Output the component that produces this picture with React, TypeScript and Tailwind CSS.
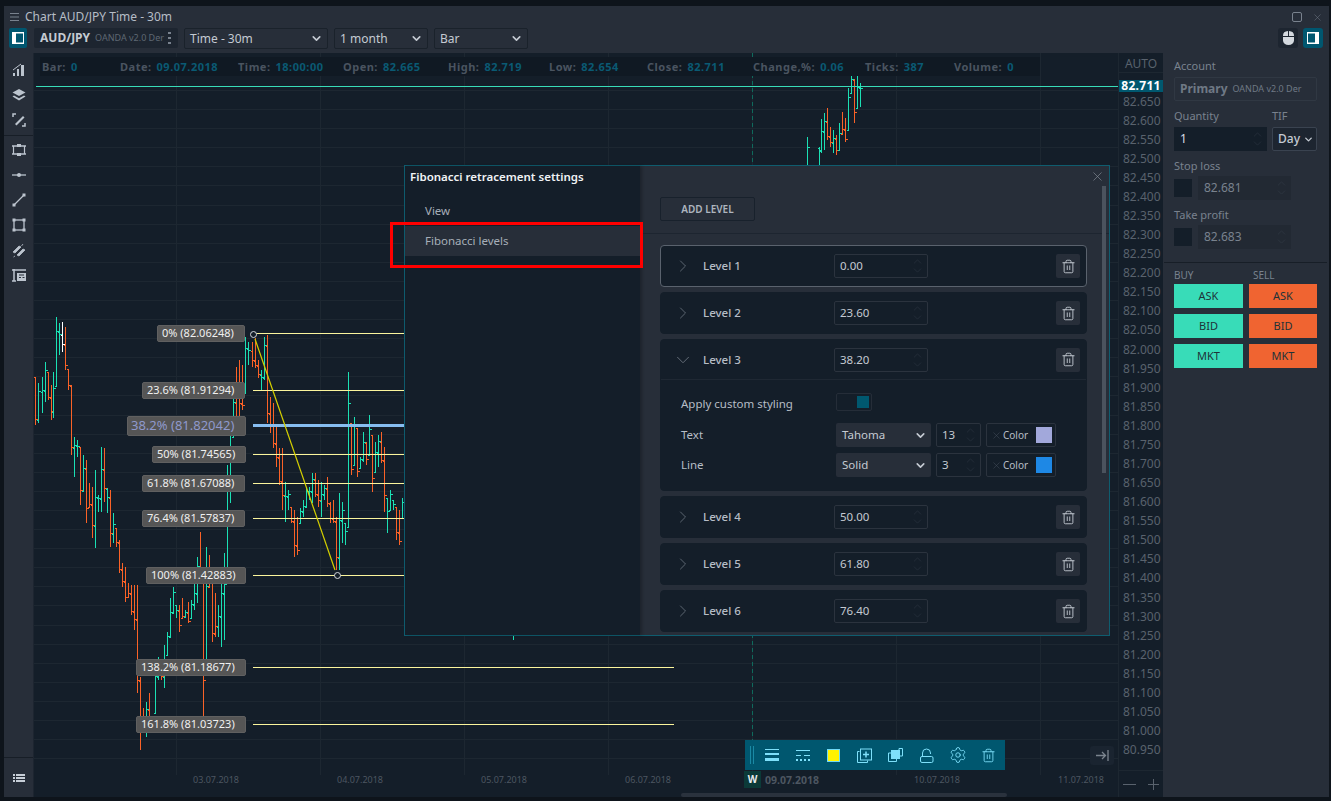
import { ChevronDown, ChevronRight, ChevronUp, Settings, Trash2, X } from "lucide-react";

type Bar = [number, number, number, "g" | "o" | "w"];

// bar positions are read off the chart at 3x: [x, top, bottom, colour]
const LEFT_BARS: Bar[] = [
  [105, 200, 345, "o"], [115, 220, 340, "g"], [125, 200, 310, "g"], [134, 155, 275, "g"], [143, 185, 270, "o"],
  [152, 225, 330, "o"], [160, 185, 325, "g"], [169, 20, 228, "g"], [178, 40, 135, "g"], [187, 35, 125, "w"],
  [196, 50, 180, "o"], [205, 178, 240, "o"], [214, 225, 435, "o"], [223, 380, 500, "g"], [232, 390, 440, "g"],
  [241, 410, 585, "o"], [250, 435, 545, "g"], [259, 450, 640, "o"], [268, 520, 590, "o"], [277, 530, 685, "o"],
  [286, 480, 715, "g"], [295, 555, 605, "g"], [304, 410, 605, "g"], [313, 415, 575, "o"], [322, 535, 610, "g"],
  [331, 540, 710, "o"], [340, 610, 700, "g"], [349, 655, 710, "o"], [358, 690, 790, "o"], [367, 760, 830, "o"],
  [376, 770, 875, "o"], [385, 820, 860, "o"], [394, 825, 915, "o"], [403, 825, 960, "o"], [412, 825, 1150, "o"],
  [421, 1100, 1320, "o"], [430, 1195, 1260, "o"], [439, 1175, 1280, "g"], [448, 1150, 1270, "o"], [466, 1070, 1210, "g"],
  [475, 1040, 1110, "g"], [484, 1060, 1110, "o"], [493, 1005, 1135, "g"], [502, 965, 1035, "g"], [511, 865, 985, "g"],
  [520, 830, 910, "g"], [529, 885, 925, "g"], [538, 885, 965, "o"], [547, 865, 925, "o"], [556, 900, 925, "g"],
  [565, 875, 940, "o"], [574, 870, 925, "g"], [583, 820, 900, "g"], [592, 740, 880, "g"], [601, 665, 800, "o"],
  [610, 780, 1220, "o"], [619, 710, 1050, "g"], [628, 735, 830, "o"], [637, 770, 995, "o"], [646, 850, 980, "o"],
  [655, 885, 980, "g"], [664, 810, 1010, "g"], [673, 730, 990, "g"], [682, 465, 810, "g"], [690, 345, 580, "g"],
  [700, 250, 380, "g"], [708, 170, 340, "o"], [717, 150, 320, "o"], [726, 165, 300, "o"], [735, 80, 250, "g"],
  [745, 95, 165, "g"], [755, 95, 170, "o"], [765, 85, 175, "o"], [773, 150, 205, "o"], [782, 180, 240, "g"],
  [791, 80, 210, "g"], [800, 75, 340, "o"], [809, 260, 370, "o"], [818, 280, 415, "o"], [827, 350, 470, "o"],
  [836, 415, 525, "o"], [845, 415, 600, "o"], [854, 515, 635, "g"], [863, 540, 600, "g"], [872, 590, 640, "o"],
  [881, 600, 740, "o"], [890, 620, 735, "o"], [899, 595, 640, "g"], [908, 570, 620, "g"], [917, 530, 590, "g"],
  [926, 530, 570, "g"], [935, 490, 580, "g"], [944, 490, 560, "o"], [953, 510, 590, "o"], [962, 515, 620, "g"],
  [971, 525, 570, "g"], [980, 500, 590, "o"], [989, 575, 640, "o"], [998, 570, 640, "o"], [1007, 620, 780, "o"],
  [1016, 550, 780, "g"], [1025, 575, 700, "g"], [1034, 640, 705, "g"], [1043, 185, 650, "g"], [1052, 340, 495, "o"],
  [1061, 320, 465, "g"], [1070, 355, 500, "o"], [1079, 440, 475, "g"], [1088, 365, 455, "g"], [1097, 395, 465, "o"],
  [1106, 315, 435, "g"], [1115, 375, 545, "o"], [1124, 395, 485, "g"], [1133, 375, 470, "g"], [1142, 365, 460, "o"],
  [1151, 410, 605, "o"], [1160, 565, 670, "g"], [1169, 540, 600, "g"], [1178, 570, 600, "g"], [1187, 590, 690, "o"],
  [1196, 600, 705, "o"], [1205, 565, 625, "g"],
];

const RIGHT_BARS: Bar[] = [
  [200, 260, 345, "g"], [236, 290, 345, "g"], [243, 208, 310, "g"], [253, 190, 300, "g"], [262, 175, 270, "o"],
  [271, 230, 290, "o"], [280, 240, 310, "g"], [289, 255, 315, "o"], [298, 220, 300, "g"], [307, 185, 255, "o"],
  [316, 205, 275, "o"], [325, 115, 240, "g"], [334, 65, 130, "g"], [343, 88, 218, "o"], [352, 75, 175, "g"],
  [361, 100, 170, "g"],
];

const BAR_COLOURS = { g: "#1be0b4", o: "#fa6227", w: "#ffffff" };

const bars = [
  ...LEFT_BARS.map(([x, t, b, c]) => ({ x: Math.round(x / 3) + 0.5, top: 310 + t / 3, bottom: 310 + b / 3, c })),
  ...RIGHT_BARS.map(([x, t, b, c]) => ({ x: 740 + Math.round(x / 3) + 0.5, top: 50 + t / 3, bottom: 50 + b / 3, c })),
];

const closes = bars.map((b, i) => {
  const h = b.bottom - b.top;
  return Math.round(b.c === "g" ? b.top + h * (i % 2 ? 0.2 : 0.35) : b.bottom - h * (i % 2 ? 0.25 : 0.12)) + 0.5;
});

const FIB_LEVELS = [
  { text: "0% (82.06248)", y: 333.5, left: 157, end: 404, width: 88 },
  { text: "23.6% (81.91294)", y: 390.5, left: 142, end: 404, width: 103 },
  { text: "50% (81.74565)", y: 454.5, left: 152, end: 404, width: 94 },
  { text: "61.8% (81.67088)", y: 483.5, left: 142, end: 404, width: 103 },
  { text: "76.4% (81.57837)", y: 518.5, left: 142, end: 404, width: 103 },
  { text: "100% (81.42883)", y: 575.5, left: 146, end: 404, width: 100 },
  { text: "138.2% (81.18677)", y: 667.5, left: 136, end: 674, width: 110 },
  { text: "161.8% (81.03723)", y: 724.5, left: 136, end: 674, width: 110 },
];

// 82.700 sits behind the last price tag, so that slot stays empty
const PRICES = Array.from({ length: 35 }, (_, i) => (82.65 - i * 0.05).toFixed(3));

const INFO = [
  { label: "Bar:", value: "0", cls: "w-[78px]" },
  { label: "Date:", value: "09.07.2018", cls: "w-[118px]" },
  { label: "Time:", value: "18:00:00", cls: "w-[105px]" },
  { label: "Open:", value: "82.665", cls: "w-[105px]" },
  { label: "High:", value: "82.719", cls: "w-[101px]" },
  { label: "Low:", value: "82.654", cls: "w-[98px]" },
  { label: "Close:", value: "82.711", cls: "w-[106px]" },
  { label: "Change,%:", value: "0.06", cls: "w-[112px]" },
  { label: "Ticks:", value: "387", cls: "w-[89px]" },
  { label: "Volume:", value: "0", cls: "w-[70px]" },
];

function PanelIcon({ side }: { side: "left" | "right" }) {
  return (
    <svg width="14" height="14" viewBox="0 0 14 14">
      <rect x="1" y="1" width="12" height="12" fill="#fff" />
      <rect x={side === "left" ? 5 : 2} y="2.5" width="7" height="9" fill="#00566f" />
    </svg>
  );
}

function Select({ label, cls }: { label: string; cls: string }) {
  return (
    <div className={`flex h-[21px] items-center justify-between rounded-[2px] border border-[#1a222b] bg-[#272e39] pl-[5px] pr-[4px] text-[12px] text-[#c4cad2] ${cls}`}>
      <span>{label}</span>
      <ChevronDown size={13} strokeWidth={3} className="text-[#c4cad2]" />
    </div>
  );
}

function RailIcon({ children }: { children: React.ReactNode }) {
  return (
    <svg width="18" height="18" viewBox="0 0 18 18" fill="none" stroke="#bcc4ce">
      {children}
    </svg>
  );
}

function LeftRail() {
  return (
    <div className="flex w-[30px] shrink-0 flex-col items-center border-r border-[#1d2530] bg-[#272e39]">
      <div className="flex flex-col items-center gap-[7px] pt-[8px]">
        <RailIcon>
          <path d="M3 15v-3h2v3zM7 15V8h2v7zM11 15V4h3v11z" fill="#bcc4ce" stroke="none" />
          <path d="M3 9l4-3 4-3" strokeWidth="1" />
        </RailIcon>
        <RailIcon>
          <path d="M9 3l6.5 3.5L9 10 2.5 6.5z" fill="#bcc4ce" stroke="none" />
          <path d="M4 9.5l-1.5 1L9 14.5l6.5-4-1.500-1L9 12.200z" fill="#bcc4ce" stroke="none" />
        </RailIcon>
        <RailIcon>
          <path d="M5 13l8-8 1.5 1.5-8 8z" fill="#bcc4ce" stroke="none" />
          <path d="M3 6V3h3M12 15h3v-3" strokeWidth="1.5" />
        </RailIcon>
      </div>
      <div className="mt-[6px] h-px w-full bg-[#171e27]" />
      <div className="flex flex-1 flex-col items-center gap-[7px] pt-[5px]">
        <RailIcon>
          <path d="M2 5h14M2 13h14" strokeWidth="1.5" />
          <path d="M3.5 5v8M14.5 5v8" strokeWidth="1.2" />
          <path d="M7 3h4v3H7zM7 12h4v3H7z" fill="#bcc4ce" stroke="none" />
        </RailIcon>
        <RailIcon>
          <path d="M2 9h14" strokeWidth="1.3" />
          <circle cx="9" cy="9" r="2" fill="#bcc4ce" stroke="none" />
        </RailIcon>
        <RailIcon>
          <path d="M4 14L14 4" strokeWidth="1.3" />
          <rect x="2.5" y="12.5" width="3" height="3" fill="#bcc4ce" stroke="none" />
          <rect x="12.5" y="2.5" width="3" height="3" fill="#bcc4ce" stroke="none" />
        </RailIcon>
        <RailIcon>
          <rect x="4" y="4" width="10" height="10" strokeWidth="1.3" />
          <path d="M2.5 2.5h3v3h-3zM12.5 2.5h3v3h-3zM2.5 12.5h3v3h-3zM12.5 12.5h3v3h-3z" fill="#bcc4ce" stroke="none" />
        </RailIcon>
        <RailIcon>
          <path d="M3 11l6-6 2 1-6 6zM7 14l6-6 2 1-6 6zM13 3l-1.5 2M5 15l-1.5 1" fill="#bcc4ce" strokeWidth="0.8" />
        </RailIcon>
        <RailIcon>
          <path d="M4 3v12M2 4h14M2 15h4" strokeWidth="1.5" />
          <rect x="7" y="7" width="9" height="8" fill="#bcc4ce" stroke="none" />
          <path d="M9 9h5M9 11.5h2M12.5 11.5h2" stroke="#272e39" />
        </RailIcon>
      </div>
      <div className="flex h-[40px] w-full items-center justify-center border-t border-[#171e27]">
        <svg width="12" height="10" viewBox="0 0 12 10" fill="#c7ced7">
          <path d="M0 1h2v2H0zM3 1h9v2H3zM0 4h2v2H0zM3 4h9v2H3zM0 7h2v2H0zM3 7h9v2H3z" />
        </svg>
      </div>
    </div>
  );
}

function ChartDrawing() {
  const hLines = Array.from({ length: 36 }, (_, i) => 90.5 + Math.round(i * 19.09));
  const vLines = [176, 320, 464, 608, 752, 896, 1040];
  return (
    <svg width="1084" height="744" viewBox="34 53 1084 744" className="absolute left-0 top-0" shapeRendering="crispEdges">
      {hLines.map((y) => (
        <line key={y} x1="34" x2="1118" y1={y} y2={y} stroke="#1d2731" />
      ))}
      {vLines.map((x) => (
        <line key={x} x1={x + 0.5} x2={x + 0.5} y1="53" y2="775" stroke="#1d2731" />
      ))}
      <line x1="752.5" x2="752.5" y1="53" y2="770" stroke="#0f6a5c" strokeDasharray="4 3" />
      {bars.map((b, i) => {
        // each bar opens where the one before it closed, which gives the stepped look
        const prev = i > 0 ? closes[i - 1] : b.top;
        const open = Math.round(Math.min(Math.max(prev, b.top), b.bottom)) + 0.5;
        return (
          <g key={i} stroke={BAR_COLOURS[b.c]}>
            <line x1={b.x} x2={b.x} y1={b.top} y2={b.bottom} />
            <line x1={b.x - 1.5} x2={b.x} y1={open} y2={open} />
            <line x1={b.x} x2={b.x + 2} y1={closes[i]} y2={closes[i]} />
          </g>
        );
      })}
      <line x1="513.5" x2="513.5" y1="635" y2="640" stroke="#1be0b4" />
      <line x1="36" x2="1118" y1="86.5" y2="86.5" stroke="#38dcb8" />
      <g>
        {FIB_LEVELS.map((l) => (
          <line key={l.y} x1="253" x2={l.end} y1={l.y} y2={l.y} stroke="#fbf59c" />
        ))}
        <rect x="253" y="424" width="151" height="3" fill="#86bdf0" />
      </g>
      <line x1="255" y1="339" x2="335" y2="570" stroke="#d4cf00" strokeWidth="1.2" shapeRendering="auto" />
      <circle cx="253.5" cy="334.5" r="3" fill="#141e29" stroke="#d5d8dc" shapeRendering="auto" />
      <circle cx="337.5" cy="575.5" r="3" fill="#141e29" stroke="#d5d8dc" shapeRendering="auto" />
    </svg>
  );
}

function ToolbarIcon({ children }: { children: React.ReactNode }) {
  return <div className="flex w-[31px] shrink-0 items-center justify-center">{children}</div>;
}

function DrawingToolbar() {
  return (
    <div className="absolute left-[711px] top-[687px] flex h-[30px] w-[260px] items-center bg-[#00576f] pl-[5px]">
      <div className="mr-[2px] h-[18px] w-[4px] border-x border-[#1a8aa5]" />
      <ToolbarIcon>
        <svg width="14" height="13" viewBox="0 0 14 13" fill="#7ee0fa">
          <rect y="0" width="14" height="1" />
          <rect y="4" width="14" height="2" />
          <rect y="9" width="14" height="3" />
        </svg>
      </ToolbarIcon>
      <ToolbarIcon>
        <svg width="14" height="11" viewBox="0 0 14 11" fill="#7ee0fa">
          <path d="M0 0h14v1H0zM0 5h5v1H0zM8 5h6v1H8zM0 9h2v2H0zM4 9h2v2H4zM8 9h2v2H8zM12 9h2v2h-2z" />
        </svg>
      </ToolbarIcon>
      <ToolbarIcon>
        <div className="h-[13px] w-[13px] border border-[#6fd8f5] bg-[#fff200]" />
      </ToolbarIcon>
      <ToolbarIcon>
        <svg width="15" height="15" viewBox="0 0 15 15" fill="none" stroke="#7ee0fa">
          <path d="M2.5 3.5H.5v11h10v-2" />
          <rect x="3.5" y="1" width="11" height="11" />
          <path d="M9 3.5v6M6 6.5h6" strokeWidth="1.5" />
        </svg>
      </ToolbarIcon>
      <ToolbarIcon>
        <svg width="15" height="14" viewBox="0 0 15 14" fill="none" stroke="#7ee0fa">
          <path d="M3.5 5H.5v8.500h8v-2.500" />
          <path d="M11 3V.5h3.500V8H12" />
          <rect x="3.5" y="2.5" width="8" height="8" fill="#7ee0fa" />
        </svg>
      </ToolbarIcon>
      <ToolbarIcon>
        <svg width="14" height="15" viewBox="0 0 14 15" fill="none" stroke="#7ee0fa">
          <rect x="0.5" y="8.5" width="12.5" height="6" rx="1.5" />
          <path d="M2.5 8V5a4 4 0 0 1 8 0v1" />
        </svg>
      </ToolbarIcon>
      <ToolbarIcon>
        <Settings size={18} strokeWidth={1.2} className="text-[#7ee0fa]" />
      </ToolbarIcon>
      <ToolbarIcon>
        <Trash2 size={15} strokeWidth={1.4} className="text-[#7ee0fa]" />
      </ToolbarIcon>
    </div>
  );
}

function Spinner({ colour = "text-[#2f3844]" }: { colour?: string }) {
  return (
    <span className={`flex flex-col ${colour}`}>
      <ChevronUp size={13} strokeWidth={1} className="-mb-[2px]" />
      <ChevronDown size={13} strokeWidth={1} className="-mt-[2px]" />
    </span>
  );
}

function NumberBox({ value, cls }: { value: string; cls: string }) {
  return (
    <div className={`flex h-[24px] items-center justify-between rounded-[2px] border border-[#2b333e] pl-[5px] pr-[3px] text-[11.5px] text-[#c4cad2] ${cls}`}>
      <span>{value}</span>
      <Spinner />
    </div>
  );
}

function ColorBox({ swatch }: { swatch: string }) {
  return (
    <div className="flex h-[24px] w-[70px] items-center rounded-[2px] border border-[#2b333e] pl-[4px] pr-[3px]">
      <X size={11} strokeWidth={1} className="text-[#4a5460]" />
      <span className="ml-[1px] text-[10px] text-[#b6bdc6]">Color</span>
      <div className={`ml-auto h-[16px] w-[16px] ${swatch}`} />
    </div>
  );
}

function LevelRow({ name, value, open, active }: { name: string; value: string; open?: boolean; active?: boolean }) {
  return (
    <div className={`w-[427px] shrink-0 rounded-[4px] bg-[#141e29] ${active ? "border border-[#5a626d]" : "border border-[#141e29]"}`}>
      <div className={`flex h-[40px] items-center pl-[15px] pr-[6px] ${open ? "border-b border-[#1f2833]" : ""}`}>
        <div className="flex w-[14px] items-center justify-center">
          {open ? (
            <ChevronDown size={22} strokeWidth={1} className="shrink-0 text-[#6a737e]" />
          ) : (
            <ChevronRight size={20} strokeWidth={1} className="shrink-0 text-[#6a737e]" />
          )}
        </div>
        <span className="ml-[13px] w-[131px] text-[11.5px] font-medium text-[#b6bdc6]">{name}</span>
        <NumberBox value={value} cls="w-[94px]" />
        <div className="ml-auto flex h-[24px] w-[24px] items-center justify-center rounded-[2px] bg-[#272e39]">
          <Trash2 size={15} strokeWidth={1.4} className="text-[#c9d0d8]" />
        </div>
      </div>
      {open && (
        <div className="pb-[13px] pl-[20px] pt-[13px] text-[11.5px] text-[#b6bdc6]">
          <div className="mb-[12px] flex h-[18px] items-center">
            <span className="w-[155px] pt-[3px]">Apply custom styling</span>
            <div className="flex h-[18px] w-[36px] items-center justify-end rounded-[2px] border border-[#252d38] pr-[2px]">
              <div className="h-[12px] w-[12px] bg-[#00586f]" />
            </div>
          </div>
          <div className="mb-[6px] flex h-[24px] items-center gap-[5px]">
            <span className="w-[150px]">Text</span>
            <div className="flex h-[24px] w-[95px] items-center justify-between rounded-[2px] bg-[#272e39] pl-[6px] pr-[4px] text-[#c4cad2]">
              <span>Tahoma</span>
              <ChevronDown size={13} strokeWidth={3} />
            </div>
            <NumberBox value="13" cls="w-[45px]" />
            <ColorBox swatch="bg-[#a2a8db]" />
          </div>
          <div className="flex h-[24px] items-center gap-[5px]">
            <span className="w-[150px]">Line</span>
            <div className="flex h-[24px] w-[95px] items-center justify-between rounded-[2px] bg-[#272e39] pl-[6px] pr-[4px] text-[#c4cad2]">
              <span>Solid</span>
              <ChevronDown size={13} strokeWidth={3} />
            </div>
            <NumberBox value="3" cls="w-[45px]" />
            <ColorBox swatch="bg-[#1e88e5]" />
          </div>
        </div>
      )}
    </div>
  );
}

function FibDialog() {
  return (
    <div className="absolute left-[370px] top-[112px] flex h-[471px] w-[706px] border border-[#0f5d6f] bg-[#272e39]">
      <div className="w-[235px] shrink-0 bg-[#141e29] shadow-[2px_0_3px_rgba(0,0,0,0.25)]">
        <div className="pl-[5px] pt-[2px] text-[11.5px] font-semibold leading-[18px] text-[#f0f3f5]">Fibonacci retracement settings</div>
        <div className="mt-[10px] flex h-[30px] items-center pl-[20px] text-[11.5px] text-[#a6aeb8]">View</div>
        <div className="flex h-[30px] items-center bg-[#272e39] pl-[20px] text-[11.5px] text-[#a6aeb8]">Fibonacci levels</div>
      </div>
      <div className="relative min-w-0 flex-1 overflow-hidden">
        <div className="flex h-[68px] items-start border-b border-[#1d2530] pl-[20px] pt-[31px]">
          <div className="flex h-[24px] w-[95px] items-center justify-center rounded-[2px] border border-[#18212c] text-[10px] font-semibold text-[#aeb5bf]">ADD LEVEL</div>
        </div>
        <div className="flex flex-col gap-[5px] pl-[20px] pt-[11px]">
          <LevelRow name="Level 1" value="0.00" active />
          <LevelRow name="Level 2" value="23.60" />
          <LevelRow name="Level 3" value="38.20" open />
          <LevelRow name="Level 4" value="50.00" />
          <LevelRow name="Level 5" value="61.80" />
          <LevelRow name="Level 6" value="76.40" />
        </div>
        <div className="absolute right-[3px] top-[20px] h-[287px] w-[4px] bg-[#4b535e]" />
        <X size={15} strokeWidth={1} className="absolute right-[4px] top-[3px] text-[#8a929c]" />
      </div>
    </div>
  );
}

function Chart() {
  return (
    <div className="relative min-w-0 flex-1 bg-[#141e29]">
      <ChartDrawing />
      <div className="absolute left-[6px] top-[4px] flex h-[19px] w-[1000px] items-center bg-[#101923] pl-[2px] pt-px text-[11px] font-bold tracking-[0.5px]">
        {INFO.map((item) => (
          <div key={item.label} className={`flex shrink-0 gap-[5px] ${item.cls}`}>
            <span className="text-[#4a5460]">{item.label}</span>
            <span className="text-[#0a5a73]">{item.value}</span>
          </div>
        ))}
      </div>
      {FIB_LEVELS.map((l) => (
        <div
          key={l.text}
          className="absolute flex h-[17px] items-center rounded-[2px] border border-[#606060] bg-[#555555] pl-[4px] text-[11px] text-[#f0f0f0]"
          style={{ left: l.left - 34, top: Math.floor(l.y) - 61, width: l.width }}
        >
          {l.text}
        </div>
      ))}
      <div className="absolute left-[93px] top-[363px] flex h-[20px] w-[119px] items-center rounded-[2px] border border-[#606060] bg-[#555555] pl-[3px] text-[13px] text-[#8f99cc]">
        38.2% (81.82042)
      </div>
      <FibDialog />
      <div className="absolute left-[356px] top-[169px] h-[46px] w-[253px] border-[3px] border-[#ff0000]" />
      <DrawingToolbar />
      <div className="absolute left-[1056px] top-[693px] flex h-[19px] w-[24px] items-center justify-center rounded-[3px] bg-[#1a2430] text-[#7b848e]">
        <svg width="13" height="11" viewBox="0 0 13 11" fill="none" stroke="#7b848e" strokeWidth="1.3">
          <path d="M0 5.5h9M6 2l3.5 3.5L6 9M12 0v11" />
        </svg>
      </div>
      <div className="absolute bottom-0 left-0 flex h-[27px] w-full items-start pl-[159px] pt-[4px] font-['Liberation_Sans',sans-serif] text-[9px] leading-[12px] text-[#4d5661]">
        <span className="w-[144px]">03.07.2018</span>
        <span className="w-[144px]">04.07.2018</span>
        <span className="w-[144px]">05.07.2018</span>
        <span className="w-[140px]">06.07.2018</span>
        <span className="w-[149px] text-[10.5px] font-bold">09.07.2018</span>
        <span className="w-[144px]">10.07.2018</span>
        <span>11.07.2018</span>
      </div>
      <div className="absolute left-[710px] top-[718px] flex h-[17px] w-[17px] items-center justify-center bg-[#0c3a38] text-[10px] font-bold text-[#e8ecef]">W</div>
      <div className="absolute left-[647px] top-[740px] h-[4px] w-[326px] rounded-full bg-[#2a323d]" />
    </div>
  );
}

function PriceAxis() {
  return (
    <div className="relative flex w-[45px] shrink-0 flex-col border-l border-[#1d2731] bg-[#141e29] font-['Liberation_Sans',sans-serif] text-[#59626d]">
      <div className="flex h-[20px] items-center justify-center border-b border-[#1d2731] pt-[2px] text-[12px]">AUTO</div>
      <div className="min-h-0 flex-1 pt-[19px]">
        {PRICES.map((p) => (
          <div key={p} className="flex h-[19.09px] items-center pl-[4px] text-[12px]">
            {p}
          </div>
        ))}
      </div>
      <div className="flex h-[27px] items-center justify-between border-t border-[#1d2731] px-[4px] text-[#6a737e]">
        <span className="h-px w-[13px] bg-[#59626d]" />
        <svg width="11" height="11" viewBox="0 0 11 11" stroke="#59626d">
          <path d="M5.5 0v11M0 5.5h11" />
        </svg>
      </div>
      <div className="absolute left-0 top-[27px] flex h-[12px] w-full items-center justify-center bg-[#00586f] text-[12px] font-bold tracking-[0.3px] text-white">82.711</div>
    </div>
  );
}

function FieldLabel({ children }: { children: React.ReactNode }) {
  return <div className="text-[11px] leading-[15px] text-[#79828e]">{children}</div>;
}

function PriceField({ label, value }: { label: string; value: string }) {
  return (
    <div className="mt-[7px]">
      <FieldLabel>{label}</FieldLabel>
      <div className="mt-[3px] flex items-center gap-[6px]">
        <div className="h-[18px] w-[18px] bg-[#141e29]" />
        <div className="flex h-[24px] w-[93px] items-center justify-between bg-[#222933] pl-[6px] pr-[3px] text-[12px] text-[#79828e]">
          <span>{value}</span>
          <Spinner colour="text-[#353e49]" />
        </div>
      </div>
    </div>
  );
}

function OrderPanel() {
  const sides = [
    { title: "BUY", colour: "bg-[#38dcb8]", width: "w-[69px]", titleCls: "" },
    { title: "SELL", colour: "bg-[#f06431]", width: "w-[68px]", titleCls: "pl-[4px]" },
  ];
  return (
    <div className="w-[166px] shrink-0 bg-[#272e39] pt-[5px]">
      <div className="px-[11px]">
        <FieldLabel>Account</FieldLabel>
        <div className="mt-[4px] flex h-[24px] w-[143px] items-center rounded-[2px] border border-[#303843] pl-[5px] text-[#6f7985]">
          <span className="text-[12px] font-bold">Primary</span>
          <span className="ml-[5px] whitespace-nowrap text-[9px]">OANDA v2.0 Der</span>
        </div>
        <div className="mt-[7px] flex gap-[5px]">
          <div className="w-[93px]">
            <FieldLabel>Quantity</FieldLabel>
            <div className="mt-[4px] flex h-[24px] items-center justify-between bg-[#141e29] pl-[6px] pr-[3px] text-[12px] text-[#d8dde3]">
              <span>1</span>
              <Spinner />
            </div>
          </div>
          <div className="w-[45px]">
            <FieldLabel>TIF</FieldLabel>
            <div className="mt-[4px] flex h-[24px] items-center justify-between rounded-[2px] border border-[#3a4350] bg-[#1d2530] pl-[5px] pr-[2px] text-[12px] font-medium text-[#c4cad2]">
              <span>Day</span>
              <ChevronDown size={11} strokeWidth={3} />
            </div>
          </div>
        </div>
        <PriceField label="Stop loss" value="82.681" />
        <PriceField label="Take profit" value="82.683" />
      </div>
      <div className="ml-px mr-[2px] mt-[13px] h-px bg-[#171e27]" />
      <div className="flex gap-[6px] px-[11px] pt-[3px]">
        {sides.map((side) => (
          <div key={side.title} className={side.width}>
            <div className={`text-[10px] leading-[18px] text-[#79828e] ${side.titleCls}`}>{side.title}</div>
            <div className="flex flex-col gap-[6px]">
              {["ASK", "BID", "MKT"].map((t) => (
                <div key={t} className={`flex h-[24px] items-center justify-center text-[11px] text-[#1e3338] ${side.colour}`}>
                  {t}
                </div>
              ))}
            </div>
          </div>
        ))}
      </div>
    </div>
  );
}

export default function App() {
  return (
    <div className="flex h-[801px] w-[1331px] flex-col overflow-hidden bg-[#0e141b] pb-[4px] pl-[4px] pr-[2px] pt-[6px] font-['Noto_Sans',sans-serif]">
      <div className="flex h-[22px] shrink-0 items-center justify-between bg-[#272e39] pl-[6px] pr-[6px]">
        <div className="flex items-center gap-[6px] text-[12px] text-[#b6bdc6]">
          <svg width="9" height="8" viewBox="0 0 9 8" stroke="#79828e">
            <path d="M0 .5h9M0 4h9M0 7.5h9" />
          </svg>
          <span>Chart AUD/JPY Time - 30m</span>
        </div>
        <div className="flex items-center gap-[10px]">
          <div className="h-[10px] w-[10px] rounded-[2px] border border-[#79828e]" />
          <X size={11} strokeWidth={1} className="text-[#79828e]" />
        </div>
      </div>
      <div className="flex h-[25px] shrink-0 items-start bg-[#272e39] pl-[5px] pr-[6px]">
        <div className="flex h-[20px] w-[18px] items-center justify-center rounded-[2px] bg-[#00566f]">
          <PanelIcon side="left" />
        </div>
        <div className="ml-[7px] flex h-[20px] w-[144px] items-center rounded-[2px] bg-[#1d2530] pl-[6px]">
          <span className="text-[12px] font-bold text-[#c4cad2]">AUD/JPY</span>
          <span className="ml-[5px] whitespace-nowrap text-[9px] text-[#5f6873]">OANDA v2.0 Der</span>
          <svg width="3" height="12" viewBox="0 0 3 12" fill="#79828e" className="ml-auto mr-[7px]">
            <path d="M0 0h3v2H0zM0 5h3v2H0zM0 10h3v2H0z" />
          </svg>
        </div>
        <Select label="Time - 30m" cls="ml-[6px] w-[144px]" />
        <Select label="1 month" cls="ml-[6px] w-[94px]" />
        <Select label="Bar" cls="ml-[6px] w-[94px]" />
        <div className="ml-auto flex items-center gap-[5px]">
          <div className="flex h-[20px] w-[20px] items-center justify-center rounded-[3px] bg-[#1d2530]">
            <svg width="11" height="14" viewBox="0 0 11 14" fill="#d4d9df">
              <path d="M0 6h11v3.5a5.5 4.5 0 0 1-11 0zM0 5v-.5A5.5 4.5 0 0 1 5 0v5zM6 5V0a5.5 4.5 0 0 1 5 4.5V5z" />
            </svg>
          </div>
          <div className="flex h-[20px] w-[20px] items-center justify-center rounded-[3px] bg-[#00566f]">
            <PanelIcon side="right" />
          </div>
        </div>
      </div>
      <div className="flex min-h-0 flex-1">
        <LeftRail />
        <Chart />
        <PriceAxis />
        <OrderPanel />
      </div>
    </div>
  );
}
